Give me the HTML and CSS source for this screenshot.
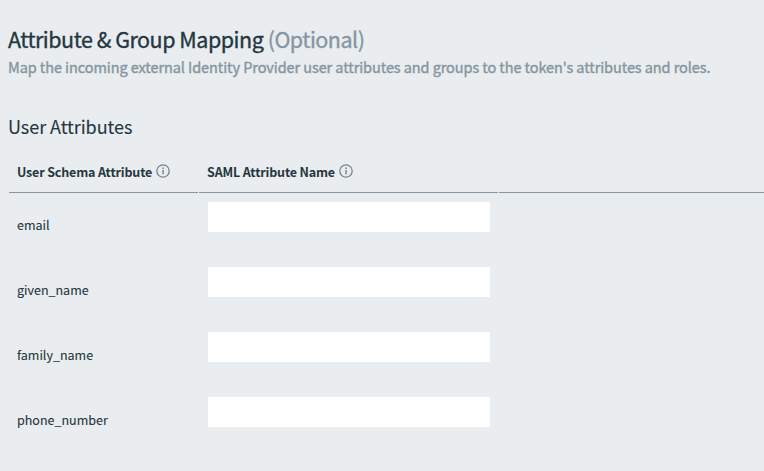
FILE: index.html
```
<!DOCTYPE html>
<html lang="en">
<head>
<meta charset="utf-8">
<title>Attribute &amp; Group Mapping</title>
<link rel="stylesheet" href="styles.css">
</head>
<body>
<main class="panel">
  <h1 class="title">Attribute &amp; Group Mapping <span class="optional">(Optional)</span></h1>
  <p class="subtitle">Map the incoming external Identity Provider user attributes and groups to the token's attributes and roles.</p>
  <h2 class="section">User Attributes</h2>
  <div class="table">
    <div class="head">
      <div class="th"><span class="th-text">User Schema Attribute</span>
        <svg class="info" viewBox="0 0 14 14"><circle cx="7" cy="7" r="6.2"/><path class="dot" d="M6.3 3.6h1.5v1.3H6.3zM6.3 6h1.5v4.2H6.3z"/></svg>
      </div>
      <div class="th"><span class="th-text">SAML Attribute Name</span>
        <svg class="info" viewBox="0 0 14 14"><circle cx="7" cy="7" r="6.2"/><path class="dot" d="M6.3 3.6h1.5v1.3H6.3zM6.3 6h1.5v4.2H6.3z"/></svg>
      </div>
      <div class="th"></div>
    </div>
    <div class="row"><label class="name" for="a1">email</label><input class="field" id="a1" type="text"></div>
    <div class="row"><label class="name" for="a2">given_name</label><input class="field" id="a2" type="text"></div>
    <div class="row"><label class="name" for="a3">family_name</label><input class="field" id="a3" type="text"></div>
    <div class="row"><label class="name" for="a4">phone_number</label><input class="field" id="a4" type="text"></div>
  </div>
</main>
</body>
</html>
```

FILE: styles.css
```
* { box-sizing: border-box; }
body {
  margin: 0;
  height: 471px;
  overflow: hidden;
  background: #e9edef;
  color: #253740;
  font-family: "Noto Sans CJK SC", "Noto Sans", sans-serif;
}
.panel { padding: 24px 0 0 8px; }
.title { margin: 0; font-size: 21.5px; line-height: 29px; font-weight: 400; letter-spacing: -0.49px; font-feature-settings: "liga"; -webkit-text-stroke: 0.35px currentColor; white-space: nowrap; }
.optional { color: #8796a1; }
.subtitle { margin: 4px 0 0; font-size: 14.5px; line-height: 20px; font-weight: 400; letter-spacing: -0.08px; font-feature-settings: "liga"; -webkit-text-stroke: 0.4px currentColor; color: #8796a1; white-space: nowrap; }
.section { margin: 36px 0 0; font-size: 18px; line-height: 26px; font-weight: 400; letter-spacing: -0.05px; -webkit-text-stroke: 0.1px currentColor; white-space: nowrap; }
.table { margin: 13px 0 0 1px; }
.head { display: grid; grid-template-columns: 189px 299px 1fr; column-gap: 1px; }
.th { display: flex; align-items: center; gap: 4px; height: 41px; padding: 0 8px; border-bottom: 1px solid #8796a5; white-space: nowrap; }
.th-text { font-size: 12.5px; line-height: 20px; font-weight: 700; letter-spacing: -0.16px; font-feature-settings: "liga"; }
.info { width: 14px; height: 14px; margin-top: -2px; fill: none; stroke: #74868f; stroke-width: 1.3; }
.info .dot { fill: #74868f; stroke: none; }
.row { display: grid; grid-template-columns: 191px 282px; height: 65px; padding: 9px 0 0 8px; }
.name { padding-top: 13px; font-size: 12.5px; line-height: 20px; -webkit-text-stroke: 0.1px currentColor; }
.field { width: 282px; height: 30px; padding: 0 8px; border: 0; border-radius: 0; background: #fff; font: inherit; font-size: 13px; }
```
